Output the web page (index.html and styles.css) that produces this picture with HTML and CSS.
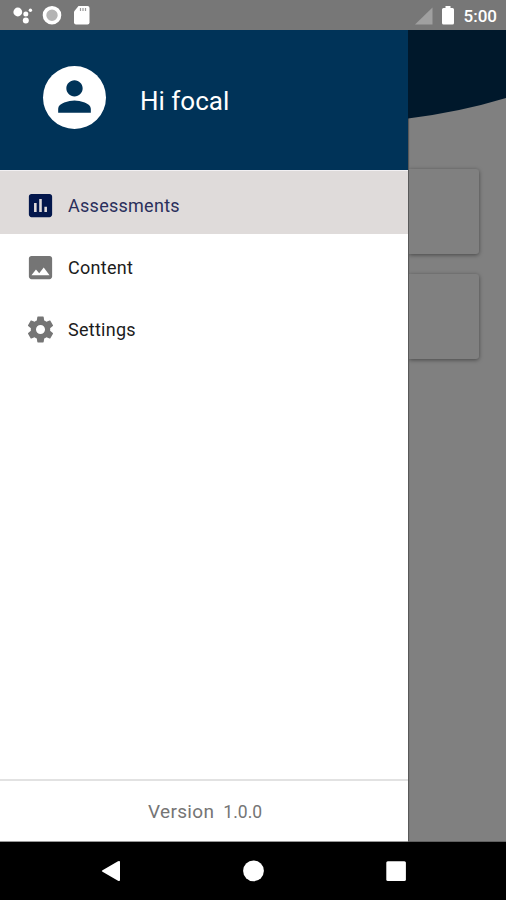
FILE: index.html
```
<!DOCTYPE html>
<html lang="en">
<head>
    <meta charset="UTF-8">
    <meta name="viewport" content="width=device-width, initial-scale=1.0">
    <title>Assessments</title>
    <link rel="stylesheet" href="styles.css">
</head>
<body>
    <div class="screen">
        <header class="status-bar">
            <svg class="status-left" width="80" height="20" viewBox="0 0 80 20">
                <g fill="#fff">
                    <circle cx="5.8" cy="7" r="4.4"/>
                    <circle cx="13.8" cy="9" r="2.5"/>
                    <circle cx="13.8" cy="15.6" r="3"/>
                    <circle cx="18.4" cy="5.2" r="1.7"/>
                    <path d="M66.500 1H75.500a2 2 0 0 1 2 2V17.500a2 2 0 0 1-2 2H64a2 2 0 0 1-2-2V6.500z"/>
                </g>
                <circle cx="40" cy="10.200" r="7.500" fill="#b4b4b4" stroke="#fff" stroke-width="3.600"/>
                <path d="M68.500 3v3M71 3v3M73.500 3v3" stroke="#999" stroke-width="1.200"/>
            </svg>
            <svg class="status-right" width="40" height="20" viewBox="0 0 40 20">
                <path d="M0 19.500 17.500 2.500V19.500z" fill="#a0a0a0"/>
                <path d="M30.500 1h5v2h2a1.500 1.500 0 0 1 1.500 1.500V18a1.500 1.500 0 0 1-1.500 1.500h-9A1.500 1.500 0 0 1 27 18V4.500A1.500 1.500 0 0 1 28.500 3h2z" fill="#fff"/>
            </svg>
            <span class="clock">5:00</span>
        </header>

        <main class="content">
            <aside class="drawer">
                <div class="profile">
                    <div class="avatar">
                        <svg width="49" height="49" viewBox="0 0 24 24" fill="#003358">
                            <path d="M12 12c2.210 0 4-1.790 4-4s-1.790-4-4-4-4 1.790-4 4 1.790 4 4 4zm0 2c-2.670 0-8 1.340-8 4v2h16v-2c0-2.660-5.330-4-8-4z"/>
                        </svg>
                    </div>
                    <span class="greeting">Hi focal</span>
                </div>

                <nav class="menu">
                    <a class="menu-item active">
                        <svg class="menu-icon" viewBox="0 0 24 24">
                            <path d="M19 3H5c-1.100 0-2 .9-2 2v14c0 1.100.9 2 2 2h14c1.100 0 2-.9 2-2V5c0-1.100-.9-2-2-2zM9 17H7v-7h2v7zm4 0h-2V7h2v10zm4 0h-2v-4h2v4z"/>
                        </svg>
                        <span>Assessments</span>
                    </a>
                    <a class="menu-item">
                        <svg class="menu-icon" viewBox="0 0 24 24">
                            <path d="M21 19V5c0-1.100-.9-2-2-2H5c-1.100 0-2 .9-2 2v14c0 1.100.9 2 2 2h14c1.100 0 2-.9 2-2zM8.500 13.500l2.500 3.010L14.500 12l4.500 6H5l3.500-4.500z"/>
                        </svg>
                        <span>Content</span>
                    </a>
                    <a class="menu-item">
                        <svg class="menu-icon" viewBox="0 0 24 24">
                            <path d="M19.430 12.980c.04-.32.07-.64.07-.98s-.03-.66-.07-.98l2.110-1.650c.19-.15.24-.42.12-.64l-2-3.460c-.12-.22-.39-.3-.61-.22l-2.490 1c-.52-.4-1.080-.73-1.690-.98l-.38-2.650C14.460 2.180 14.250 2 14 2h-4c-.25 0-.46.18-.49.42l-.38 2.650c-.61.25-1.170.59-1.690.98l-2.490-1c-.23-.09-.49 0-.61.22l-2 3.460c-.13.22-.07.49.12.64l2.110 1.650c-.04.32-.07.65-.07.98s.03.66.07.98l-2.110 1.650c-.19.15-.24.42-.12.64l2 3.460c.12.22.39.3.61.22l2.490-1c.52.4 1.080.73 1.690.98l.38 2.650c.03.24.24.42.49.42h4c.25 0 .46-.18.49-.42l.38-2.650c.61-.25 1.170-.59 1.690-.98l2.490 1c.23.09.49 0 .61-.22l2-3.460c.12-.22.07-.49-.12-.64l-2.110-1.650zM12 15.500c-1.930 0-3.500-1.570-3.500-3.500s1.570-3.500 3.500-3.500 3.500 1.570 3.500 3.500-1.570 3.500-3.500 3.500z"/>
                        </svg>
                        <span>Settings</span>
                    </a>
                </nav>

                <footer class="version">
                    <span>Version</span>
                    <span class="version-number">1.0.0</span>
                </footer>
            </aside>

            <!-- Dimmed page behind the drawer -->
            <section class="page">
                <svg class="page-header" width="98" height="90" viewBox="0 0 98 90">
                    <path d="M0 0H98V68Q52 82 0 88.500z" fill="#00182b"/>
                </svg>
                <div class="card"></div>
                <div class="card"></div>
            </section>
        </main>

        <footer class="nav-bar">
            <svg width="20" height="22" viewBox="0 0 20 22" fill="#fff">
                <path d="M1.500 10.200L17 1.300Q19 .3 19 2V20Q19 21.700 17 20.700L1.500 11.800Q0 11 1.500 10.200z"/>
            </svg>
            <svg width="22" height="22" viewBox="0 0 22 22" fill="#fff">
                <circle cx="10.500" cy="10.800" r="10.400"/>
            </svg>
            <svg width="20" height="20" viewBox="0 0 20 20" fill="#fff">
                <rect x="0.300" y="0.300" width="19.600" height="19.600" rx="1.500"/>
            </svg>
        </footer>
    </div>
</body>
</html>
```
FILE: styles.css
```
* {
    box-sizing: border-box;
}

body {
    margin: 0;
    font-family: Roboto, "Liberation Sans", sans-serif;
}

.screen {
    display: flex;
    flex-direction: column;
    width: 506px;
    height: 900px;
    overflow: hidden;
}

.status-bar {
    display: flex;
    align-items: center;
    height: 30px;
    padding: 0 9px 0 12px;
    background-color: #777777;
}

.status-right {
    margin: 0 9px 0 auto;
}

.clock {
    color: #ffffff;
    font-size: 17px;
    font-weight: 500;
    line-height: 30px;
    padding-top: 2px;
}

.content {
    display: flex;
    height: 812px;
}

.drawer {
    display: flex;
    flex-direction: column;
    width: 408px;
    background-color: #ffffff;
}

.profile {
    display: flex;
    align-items: center;
    height: 140px;
    padding: 0 0 5px 43px;
    background-color: #003358;
}

.avatar {
    display: flex;
    align-items: center;
    justify-content: center;
    width: 63px;
    height: 63px;
    padding-bottom: 2px;
    border-radius: 50%;
    background-color: #ffffff;
}

.greeting {
    margin-left: 34px;
    padding-top: 7px;
    color: #ffffff;
    font-size: 26px;
}

.menu {
    flex: 1;
    border-top: 1px solid #f2f0f2;
}

.menu-item {
    display: flex;
    align-items: center;
    gap: 12px;
    height: 62px;
    padding-left: 25px;
    color: #1c1c1c;
    font-size: 18px;
    letter-spacing: 0.27px;
}

.menu-item.active {
    height: 63px;
    margin-bottom: 2px;
    padding-top: 5px;
    background-color: #dfdbda;
    color: #2a2f5c;
}

.menu-icon {
    width: 31px;
    height: 31px;
    fill: #757575;
}

.active .menu-icon {
    fill: #03174c;
}

.version {
    display: flex;
    align-items: center;
    justify-content: center;
    gap: 9px;
    height: 63px;
    padding-left: 2px;
    border-top: 2px solid #e2e2e2;
    border-bottom: 1px solid #999999;
    color: #757575;
    font-size: 19px;
    letter-spacing: 0.35px;
}

.version-number {
    padding-top: 1px;
    font-size: 17.5px;
    letter-spacing: 0;
}

.page {
    width: 98px;
    background-color: #808080;
    border-bottom: 1px solid #606060;
    box-shadow: inset 2px 0 1px -1px #555555;
}

.page-header {
    display: block;
    margin-bottom: 49px;
}

.card {
    width: 70px;
    height: 85px;
    margin: 0 0 20px 1px;
    border-radius: 0 3px 3px 0;
    background-color: #808080;
    box-shadow: 0 1px 4px rgba(0, 0, 0, 0.45);
    clip-path: inset(-5px -5px -6px 0);
}

.nav-bar {
    display: flex;
    align-items: center;
    justify-content: space-between;
    height: 58px;
    padding: 0 100px 0 101px;
    background-color: #000000;
}
```
